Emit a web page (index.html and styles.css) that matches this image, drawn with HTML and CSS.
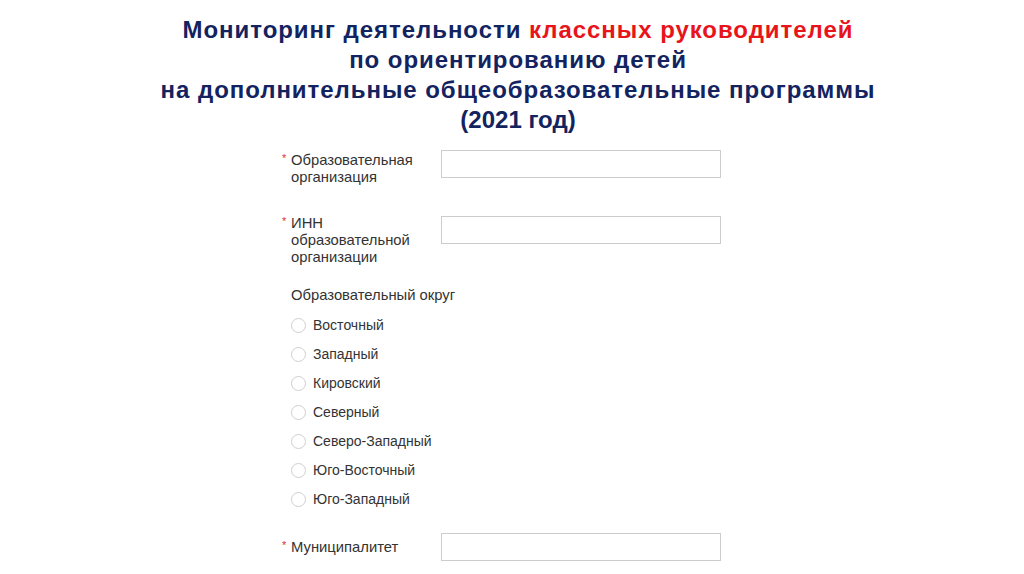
FILE: index.html
```html
<!DOCTYPE html>
<html lang="ru">
<head>
<meta charset="utf-8">
<link rel="stylesheet" href="styles.css">
</head>
<body>
<div class="page">
  <h1 class="title">
    <span class="line wide">Мониторинг деятельности <span class="red">классных руководителей</span></span>
    <span class="line wide">по ориентированию детей</span>
    <span class="line wide">на дополнительные общеобразовательные программы</span>
    <span class="line">(2021 год)</span>
  </h1>
  <form class="form">
    <div class="row row-first">
      <label class="label"><span class="req">*</span><span class="ltext">Образовательная<br>организация</span></label>
      <input class="input" type="text">
    </div>
    <div class="row row-inn">
      <label class="label"><span class="req">*</span><span class="ltext">ИНН<br>образовательной<br>организации</span></label>
      <input class="input" type="text">
    </div>
    <div class="group">
      <div class="group-title">Образовательный округ</div>
      <label class="radio"><span class="circle"></span>Восточный</label>
      <label class="radio"><span class="circle"></span>Западный</label>
      <label class="radio"><span class="circle"></span>Кировский</label>
      <label class="radio"><span class="circle"></span>Северный</label>
      <label class="radio"><span class="circle"></span>Северо-Западный</label>
      <label class="radio"><span class="circle"></span>Юго-Восточный</label>
      <label class="radio"><span class="circle"></span>Юго-Западный</label>
    </div>
    <div class="row row-mun">
      <label class="label"><span class="req">*</span><span class="ltext">Муниципалитет</span></label>
      <input class="input" type="text">
    </div>
  </form>
</div>
</body>
</html>
```
FILE: styles.css
```css
html, body {
  margin: 0;
  padding: 0;
  background: #ffffff;
}
.page {
  width: 1024px;
  height: 574px;
  overflow: hidden;
  font-family: "Liberation Sans", Arial, sans-serif;
}
.title {
  margin: 0;
  padding-top: 15px;
  padding-left: 12px;
  display: flex;
  flex-direction: column;
  align-items: center;
  font-family: "Liberation Sans", Arial, sans-serif;
  font-weight: bold;
  font-size: 24px;
  line-height: 30px;
  color: #13235f;
}
.wide { letter-spacing: 0.95px; }
.red { color: #e8141b; }
.form {
  margin-left: 282px;
  margin-top: 15px;
  width: 440px;
}
.row {
  display: flex;
  align-items: flex-start;
}
.label {
  width: 159px;
  display: flex;
  font-size: 14.8px;
  line-height: 17px;
  color: #333333;
}
.req {
  color: #e03030;
  width: 9px;
  font-size: 11px;
  line-height: 12px;
}
.input {
  width: 280px;
  height: 28px;
  box-sizing: border-box;
  border: 1px solid #cccccc;
  margin: 0;
  padding: 0;
  background: #fff;
}
.row-first .label { padding-top: 2px; }
.row-inn { margin-top: 30px; }
.row-inn .label { margin-top: -1px; }
.group {
  margin-top: 21px;
  padding-left: 9px;
  color: #333333;
}
.group-title {
  font-size: 14.8px;
  line-height: 17px;
  margin-bottom: 7px;
}
.radio {
  display: flex;
  align-items: center;
  height: 29px;
  font-size: 14px;
  line-height: 17px;
}
.circle {
  width: 15px;
  height: 15px;
  box-sizing: border-box;
  border: 1px solid #cfcfcf;
  border-radius: 50%;
  margin-right: 7px;
  background: #fff;
}
.row-mun { margin-top: 19px; align-items: center; }
```
